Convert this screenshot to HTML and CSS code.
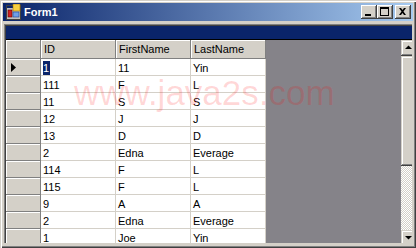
FILE: index.html
```html
<!DOCTYPE html>
<html lang="en">
<head>
  <meta charset="UTF-8">
  <title>Form1</title>
  <link rel="stylesheet" href="styles.css">
</head>
<body>
  <div class="window">
    <div class="titlebar">
      <svg class="app-icon" width="16" height="16" viewBox="0 0 16 16">
        <rect x="0.5" y="1.5" width="14" height="14" fill="#c0c0c0" stroke="#404040"/>
        <rect x="1" y="2" width="13" height="2" fill="#0a246a"/>
        <rect x="2" y="6" width="4" height="7" fill="#d02020" stroke="#600000" stroke-width="0.6"/>
        <rect x="7" y="0" width="7" height="7" fill="#f8d040" stroke="#a07000" stroke-width="0.6"/>
        <rect x="7" y="8" width="6" height="5" fill="#6fa0e8" stroke="#1a3f90" stroke-width="0.6"/>
      </svg>
      <span class="title">Form1</span>
      <div class="caption-buttons">
        <span class="cbtn"><svg width="16" height="14" viewBox="0 0 16 14"><rect x="4" y="9" width="6" height="2" fill="#000"/></svg></span>
        <span class="cbtn"><svg width="16" height="14" viewBox="0 0 16 14"><rect x="3.5" y="2.5" width="8" height="8" fill="none" stroke="#000"/><rect x="3" y="2" width="9" height="2" fill="#000"/></svg></span>
        <span class="cbtn close"><svg width="16" height="14" viewBox="0 0 16 14"><path d="M4 3h2l1.5 2L9 3h2L8.5 6.5 11 10H9L7.5 8 6 10H4l2.5-3.5z" fill="#000"/></svg></span>
      </div>
    </div>

    <div class="client">
      <div class="datagrid">
        <div class="grid-caption"></div>
        <div class="grid-body">
          <div class="grid-area">
            <div class="grid">
              <div class="rh head"></div>
              <div class="ch">ID</div>
              <div class="ch">FirstName</div>
              <div class="ch">LastName</div>

              <div class="rh"><svg class="current" width="5" height="9" viewBox="0 0 5 9"><path d="M0 0L5 4.5L0 9z" fill="#000"/></svg></div>
              <div class="cell"><span class="sel">1</span></div><div class="cell">11</div><div class="cell">Yin</div>

              <div class="rh"></div><div class="cell">111</div><div class="cell">F</div><div class="cell">L</div>
              <div class="rh"></div><div class="cell">11</div><div class="cell">S</div><div class="cell">S</div>
              <div class="rh"></div><div class="cell">12</div><div class="cell">J</div><div class="cell">J</div>
              <div class="rh"></div><div class="cell">13</div><div class="cell">D</div><div class="cell">D</div>
              <div class="rh"></div><div class="cell">2</div><div class="cell">Edna</div><div class="cell">Everage</div>
              <div class="rh"></div><div class="cell">114</div><div class="cell">F</div><div class="cell">L</div>
              <div class="rh"></div><div class="cell">115</div><div class="cell">F</div><div class="cell">L</div>
              <div class="rh"></div><div class="cell">9</div><div class="cell">A</div><div class="cell">A</div>
              <div class="rh"></div><div class="cell">2</div><div class="cell">Edna</div><div class="cell">Everage</div>
              <div class="rh"></div><div class="cell">1</div><div class="cell">Joe</div><div class="cell">Yin</div>
            </div>
          </div>
          <div class="vscroll">
            <div class="sbtn"><svg width="16" height="16" viewBox="0 0 16 16"><path d="M4 9h7L7.5 5.5z" fill="#000"/></svg></div>
            <div class="thumb"></div>
            <div class="track"></div>
            <div class="sbtn"><svg width="16" height="16" viewBox="0 0 16 16"><path d="M4 6h7L7.5 9.5z" fill="#000"/></svg></div>
          </div>
        </div>
      </div>
    </div>

    <div class="watermark">www.java2s.com</div>
  </div>
</body>
</html>
```

FILE: styles.css
```css
body {
  margin: 0;
  font-family: "Liberation Sans", Arial, sans-serif;
  font-size: 11px;
}
.window {
  position: relative;
  box-sizing: border-box;
  width: 416px;
  height: 248px;
  padding: 3px 4px 5px 4px;
  background: #d4d0c8;
  box-shadow: inset 1px 1px #d4d0c8, inset 2px 2px #fff, inset -1px -1px #404040, inset -2px -2px #808080;
  display: flex;
  flex-direction: column;
  overflow: hidden;
}
.titlebar {
  height: 18px;
  margin: 0 -1px;
  background: linear-gradient(to right, #0a246a, #a6caf0);
  display: flex;
  align-items: center;
  flex-shrink: 0;
}
.app-icon {
  margin-left: 3px;
  margin-top: -1px;
}
.title {
  margin-left: 2px;
  color: #fff;
  font-weight: bold;
  font-size: 11px;
}
.caption-buttons {
  margin-left: auto;
  margin-right: 2px;
  display: flex;
}
.cbtn {
  width: 16px;
  height: 14px;
  background: #d4d0c8;
  box-shadow: inset -1px -1px #404040, inset 1px 1px #fff, inset -2px -2px #808080;
}
.cbtn svg {
  display: block;
}
.cbtn.close {
  margin-left: 2px;
}
.client {
  flex: 1;
  margin-top: 3px;
  overflow: hidden;
}
.datagrid {
  box-sizing: border-box;
  width: 413px;
  height: 222px;
  padding: 2px 0 0 2px;
  box-shadow: inset 1px 1px #808080, inset 2px 2px #404040;
  display: flex;
  flex-direction: column;
}
.grid-caption {
  height: 17px;
  background: #0a246a;
  border-bottom: 1px solid #000;
}
.grid-body {
  flex: 1;
  display: flex;
}
.grid-area {
  flex: 1;
  background: #858389;
  overflow: hidden;
}
.grid {
  display: grid;
  grid-template-columns: 35px 75px 75px 75px;
  grid-auto-rows: 17px;
  grid-template-rows: 19px;
}
.rh, .ch, .cell {
  box-sizing: border-box;
}
.rh {
  background: #d4d0c8;
  border-right: 1px solid #808080;
  border-bottom: 1px solid #808080;
  box-shadow: inset 1px 1px #fff;
  padding: 4px 0 0 5px;
}
.current {
  display: block;
}
.ch {
  background: #d4d0c8;
  border-right: 1px solid #808080;
  border-bottom: 1px solid #808080;
  box-shadow: inset 1px 1px #fff;
  padding-left: 3px;
  line-height: 18px;
  color: #000;
}
.cell {
  background: #fff;
  border-right: 1px solid #d4d0c8;
  border-bottom: 1px solid #d4d0c8;
  padding: 2px 0 0 2px;
  line-height: 14px;
  white-space: nowrap;
}
.sel {
  display: inline-block;
  background: #0a246a;
  color: #fff;
  padding-right: 1px;
}
.vscroll {
  width: 16px;
  display: flex;
  flex-direction: column;
}
.sbtn {
  height: 16px;
  background: #d4d0c8;
  box-shadow: inset -1px -1px #404040, inset 1px 1px #d4d0c8, inset -2px -2px #808080, inset 2px 2px #fff;
}
.sbtn svg {
  display: block;
}
.thumb {
  height: 110px;
  background: #d4d0c8;
  box-shadow: inset -1px -1px #404040, inset 1px 1px #d4d0c8, inset -2px -2px #808080, inset 2px 2px #fff;
}
.track {
  flex: 1;
  background: conic-gradient(#fff 25%, #d4d0c8 0 50%, #fff 0 75%, #d4d0c8 0) 0 0 / 2px 2px;
}
.watermark {
  position: absolute;
  left: 74px;
  top: 73px;
  font-size: 35px;
  color: rgba(255, 0, 0, 0.16);
  pointer-events: none;
  white-space: nowrap;
}
```
